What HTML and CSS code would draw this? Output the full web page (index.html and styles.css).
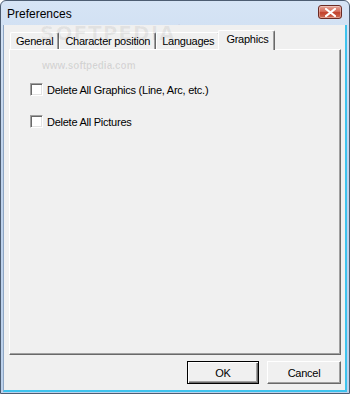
FILE: index.html
```html
<!DOCTYPE html>
<html>
<head>
<meta charset="utf-8">
<link rel="stylesheet" href="styles.css">
</head>
<body>
<div class="window">
  <div class="titlebar">
    <span class="title">Preferences</span>
    <span class="close">
      <svg width="11" height="9" viewBox="0 0 11 9"><path d="M1 1 L10 8 M10 1 L1 8" stroke="#fff" stroke-width="2.2" stroke-linecap="square"/></svg>
    </span>
  </div>
  <div class="client">
    <div class="tabs">
      <div class="tab">General</div>
      <div class="tab">Character position</div>
      <div class="tab">Languages</div>
      <div class="tab active">Graphics</div>
    </div>
    <div class="panel">
      <label class="check"><span class="box"></span><span>Delete All Graphics (Line, Arc, etc.)</span></label>
      <label class="check"><span class="box"></span><span>Delete All Pictures</span></label>
    </div>
    <div class="buttons">
      <div class="btn default"><span>OK</span></div>
      <div class="btn"><span>Cancel</span></div>
    </div>
    <span class="wm-logo">SOFTPEDIA<sup>™</sup></span>
    <span class="wm-url">www.softpedia.com</span>
  </div>
</div>
</body>
</html>
```
FILE: styles.css
```css
html, body { margin: 0; padding: 0; background: #fff; }
body { font-family: "Liberation Sans", Arial, sans-serif; font-size: 11px; letter-spacing: -0.25px; color: #000; }

.window {
  width: 350px; height: 394px; box-sizing: border-box;
  display: flex; flex-direction: column;
  border: 1px solid #4d5d72;
  border-radius: 6px 6px 0 0;
  background: linear-gradient(#d6e4f5, #bfd3ec 40%, #bcd1eb);
  padding: 0 2px 1px 2px;
}
.titlebar {
  height: 24px; flex: none;
  display: flex; align-items: center; justify-content: space-between;
  padding: 0 5px 0 4px;
}
.title { font-size: 12px; letter-spacing: 0; color: #000; padding-top: 1px; }
.close {
  width: 24px; height: 14px; box-sizing: border-box;
  border: 1px solid #6b2a24; border-radius: 3px;
  background: linear-gradient(#e6a497, #d46d5c 45%, #c2412c 55%, #cf6d56);
  display: flex; align-items: center; justify-content: center;
  box-shadow: inset 0 0 0 1px rgba(255,255,255,0.35);
  margin-top: -2px;
}
.client {
  flex: 1; position: relative;
  background: #f0f0f0;
  border-left: 1px solid #8ea6c4;
  border-right: 2px solid #3ec3ee;
  border-bottom: 2px solid #3ec3ee;
  padding: 5px 4px 6px 5px;
  display: flex; flex-direction: column;
}
.tabs {
  display: flex; align-items: flex-end; height: 19px; padding-left: 1px;
  position: relative; z-index: 2;
}
.tab {
  height: 16px; line-height: 16px; padding: 0 5px 0 5px;
  border-top: 1px solid #fff; border-left: 1px solid #fff;
  border-right: 1px solid #696969;
  box-shadow: inset -1px 0 #a0a0a0;
  border-radius: 2px 2px 0 0;
  white-space: nowrap;
}
.tab.active {
  height: 19px; line-height: 16px;
  margin: 0 -2px -1px -2px; padding: 0 6px 0 7px;
  background: #f0f0f0; position: relative; z-index: 3;
}
.panel {
  flex: 1;
  border-top: 1px solid #fff; border-left: 1px solid #fff;
  border-right: 1px solid #696969; border-bottom: 1px solid #696969;
  box-shadow: inset -1px -1px #a0a0a0;
  padding: 33px 0 0 20px;
  display: flex; flex-direction: column; gap: 19px;
}
.check { display: flex; align-items: center; gap: 4px; height: 13px; }
.box {
  width: 13px; height: 13px; box-sizing: border-box; background: #fff;
  border-top: 1px solid #a0a0a0; border-left: 1px solid #a0a0a0;
  border-right: 1px solid #fff; border-bottom: 1px solid #fff;
  box-shadow: inset 1px 1px #696969, inset -1px -1px #e3e3e3;
}
.buttons {
  display: flex; justify-content: flex-end; gap: 8px;
  padding-top: 6px; height: 23px; flex: none;
}
.btn {
  width: 74px; height: 23px; box-sizing: border-box;
  border-top: 1px solid #fff; border-left: 1px solid #fff;
  border-right: 1px solid #696969; border-bottom: 1px solid #696969;
  box-shadow: inset -1px -1px #a0a0a0;
  display: flex; align-items: center; justify-content: center;
  background: #f0f0f0;
}
.btn.default {
  width: 72px;
  border: 1px solid #000;
  box-shadow: inset 1px 1px #fff, inset -1px -1px #696969, inset -2px -2px #a0a0a0;
}
.wm-logo {
  position: absolute; left: 36px; top: -4px;
  font-family: "DejaVu Sans", sans-serif; font-weight: bold;
  font-size: 20px; letter-spacing: 1px; color: rgba(0,0,0,0.06);
  pointer-events: none; z-index: 4;
}
.wm-logo sup { font-size: 6px; vertical-align: 12px; }
.wm-url {
  position: absolute; left: 38px; top: 35px;
  font-size: 10px; letter-spacing: 0; color: rgba(0,0,0,0.12);
  font-weight: bold; pointer-events: none;
}
```
